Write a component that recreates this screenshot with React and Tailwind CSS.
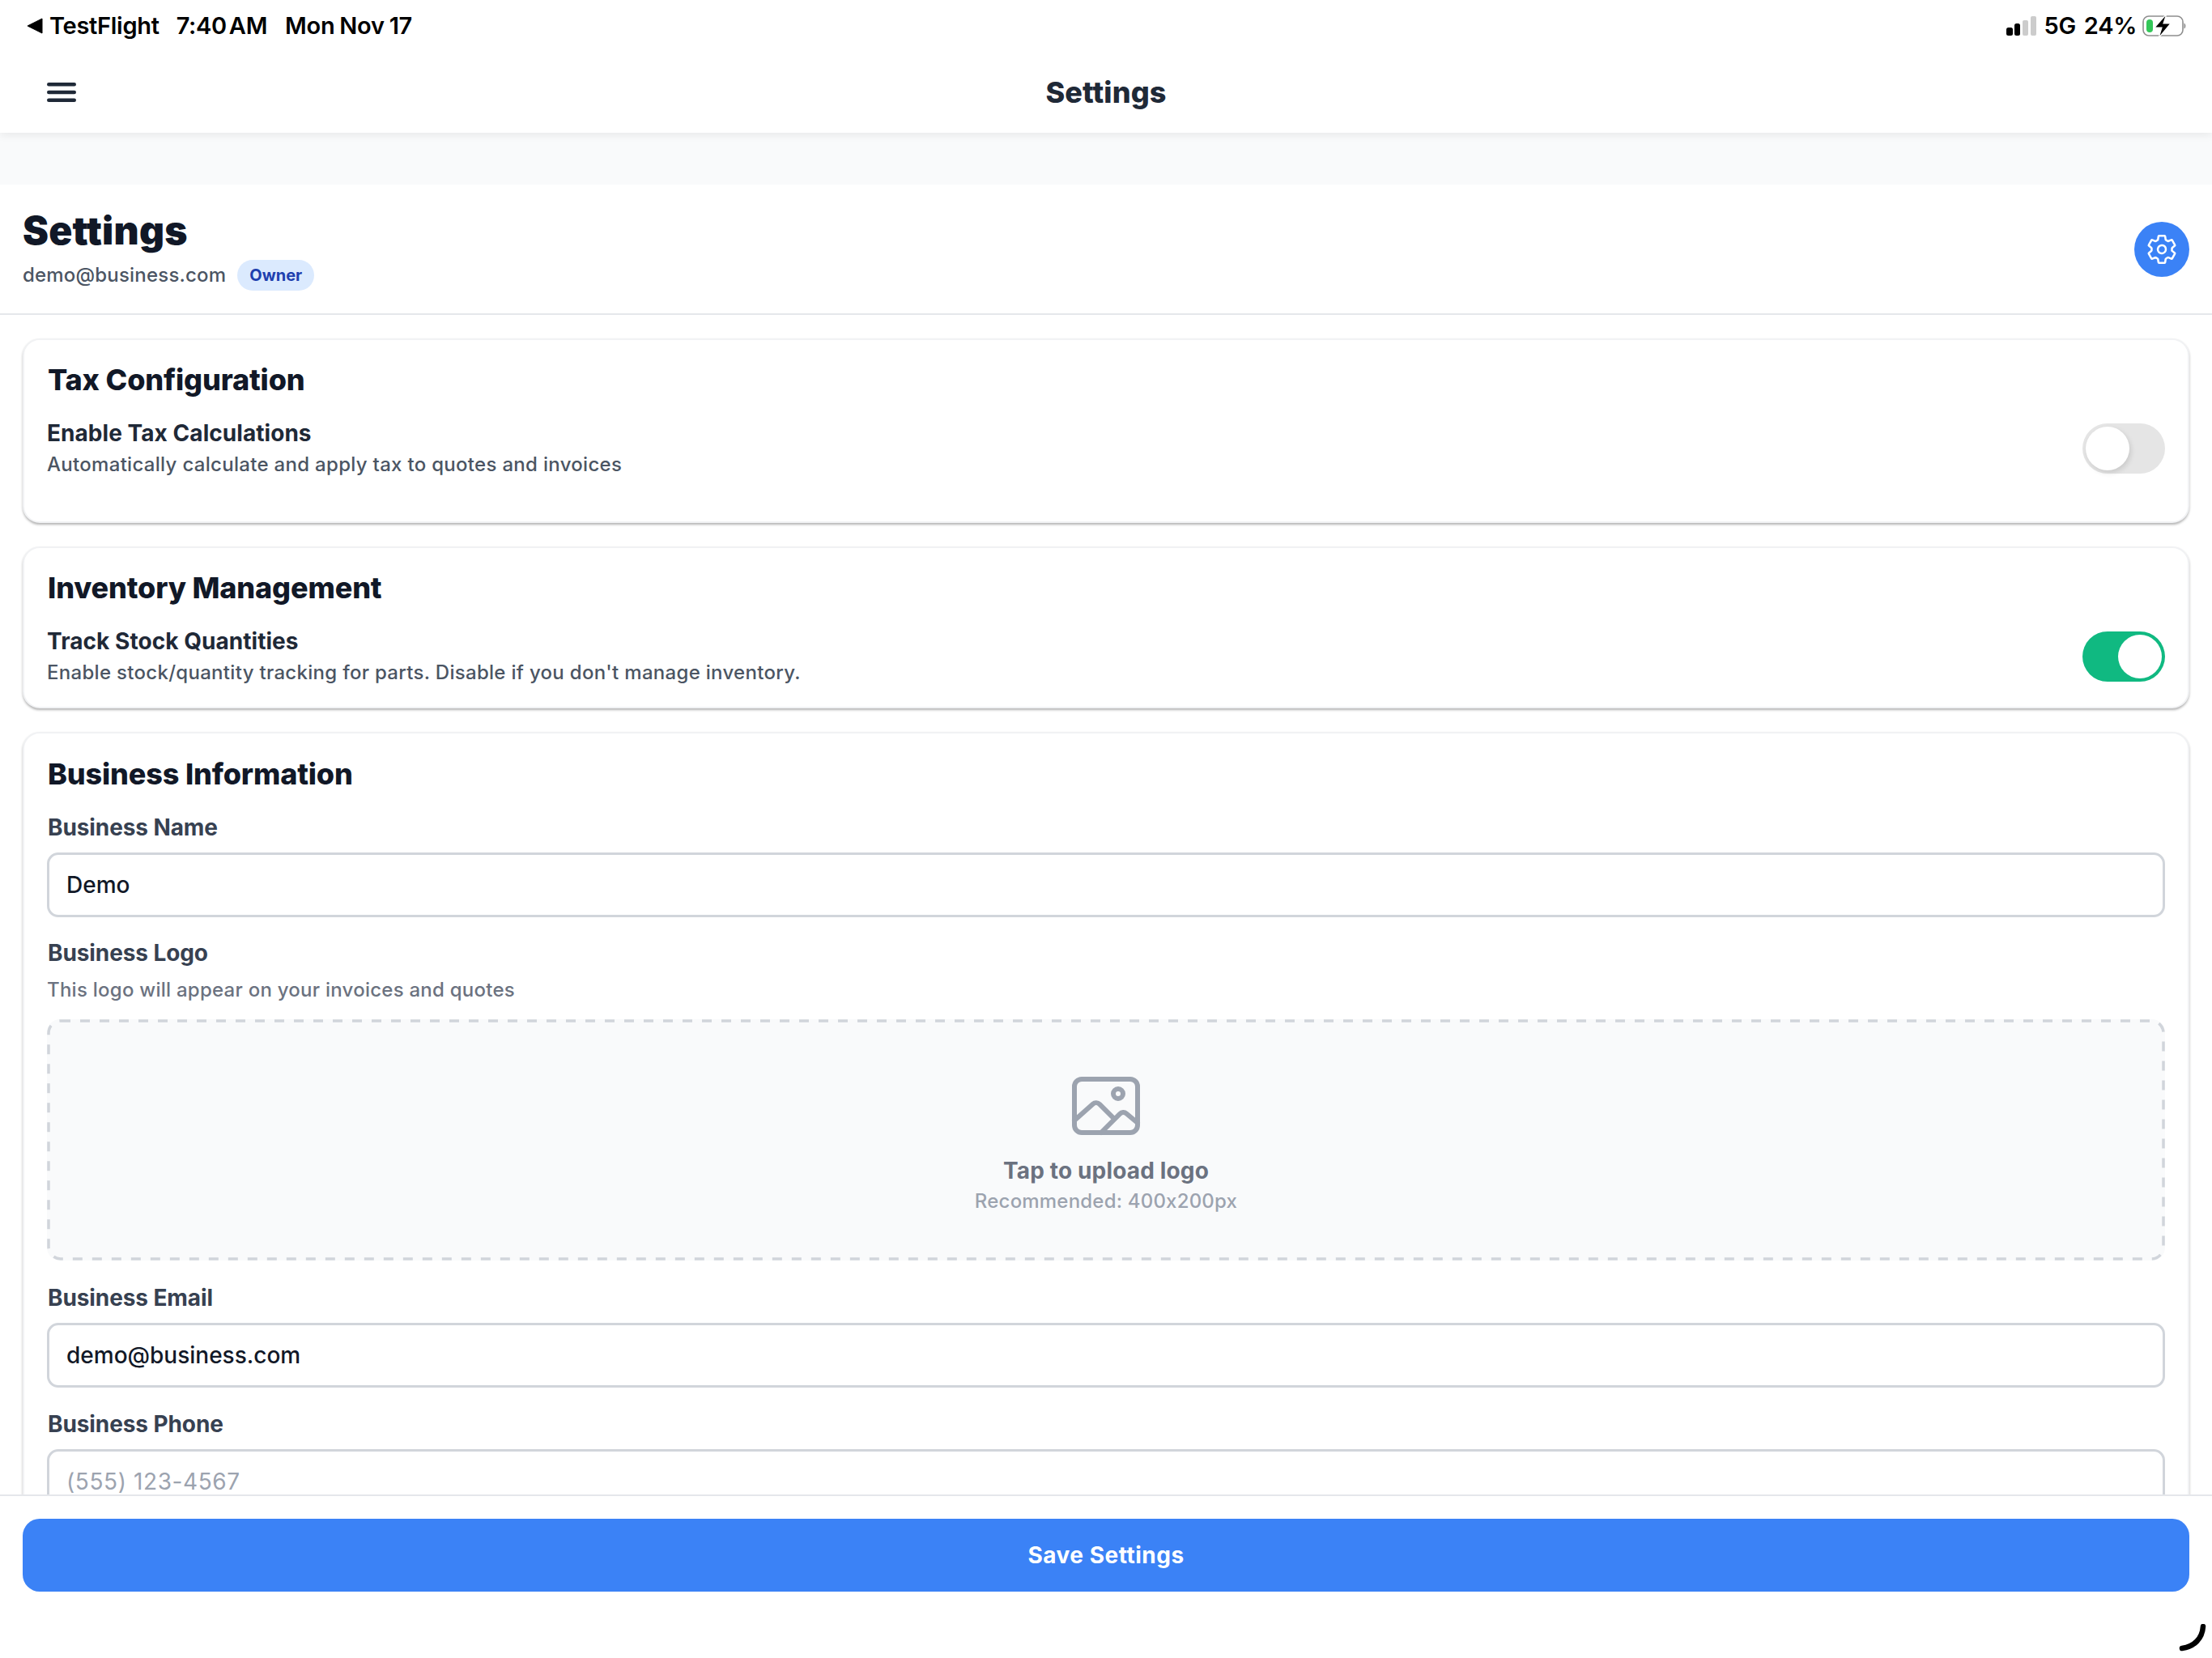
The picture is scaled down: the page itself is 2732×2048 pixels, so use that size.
import React from "react";
import { IoMenu, IoSettingsOutline, IoImageOutline } from "react-icons/io5";

const StatusBar = () => (
  <div className="flex h-[64px] items-center justify-between pl-[33px] pr-[30px] text-[29px] font-semibold tracking-[-0.3px] text-black">
    <div className="flex items-center">
      <svg width="20" height="20" viewBox="0 0 20 20" className="mr-[8px]">
        <path d="M19 1v18L1 10z" fill="#000" stroke="#000" strokeLinejoin="round" />
      </svg>
      <span>TestFlight</span>
      <span className="ml-[21px] [word-spacing:-4px]">7:40 AM</span>
      <span className="ml-[22px] [word-spacing:-1px]">Mon Nov 17</span>
    </div>
    <div className="flex items-center">
      <svg width="38" height="24" viewBox="0 0 38 24" className="mr-[-1px]">
        <rect x="0" y="14" width="8" height="10" rx="2.5" fill="#000" />
        <rect x="10" y="9" width="7" height="15" rx="2.5" fill="#000" />
        <rect x="20" y="5" width="7" height="19" rx="2" fill="#ccc" />
        <rect x="30" y="0" width="7" height="24" rx="2" fill="#ccc" />
      </svg>
      <span className="ml-[9px]">5G</span>
      <span className="ml-[10px]">24%</span>
      <svg width="56" height="30" viewBox="0 0 56 30" className="ml-[7px]">
        <rect x="1" y="3" width="49" height="24" rx="7" fill="none" stroke="#8e8e8e" strokeWidth="1.6" />
        <rect x="5" y="7" width="8" height="16" rx="4" fill="#34c759" />
        <path d="M51.5 11.5c2.5 1 2.5 6 0 7z" fill="#8e8e8e" />
        <path d="M30 0 15 17h9l-4 13 15-18h-9z" fill="#000" stroke="#fff" strokeWidth="1.2" />
      </svg>
    </div>
  </div>
);

const Switch = ({ on }) => (
  <div
    className={
      on
        ? "flex h-[62px] w-[102px] shrink-0 items-center justify-end rounded-full bg-[#10b981] pr-[4px]"
        : "flex h-[62px] w-[102px] shrink-0 items-center rounded-full bg-[#e5e5e5] pl-[4px]"
    }
  >
    <div
      className={
        on
          ? "h-[54px] w-[54px] rounded-full bg-white"
          : "h-[54px] w-[54px] rounded-full bg-white shadow-[2px_3px_6px_rgba(0,0,0,0.12)]"
      }
    />
  </div>
);

const Card = ({ children, className }) => (
  <div
    className={
      "rounded-[21px] border-2 border-[#f1f2f4] bg-white px-[28px] shadow-[0_2px_3px_rgba(0,0,0,0.3)] " +
      className
    }
  >
    {children}
  </div>
);

const CardTitle = ({ children }) => (
  <h2 className="ml-[1px] text-[36px] leading-[44px] font-extrabold tracking-[-0.15px] text-[#111827]">{children}</h2>
);

const ToggleRow = ({ title, desc, on }) => (
  <div className="flex items-center justify-between">
    <div>
      <div className="text-[28px] leading-[36px] font-[650] tracking-[0.05px] text-[#1f2937]">{title}</div>
      <div className="mt-[4px] text-[24px] leading-[34px] font-medium tracking-[0.3px] text-[#4b5563]">{desc}</div>
    </div>
    <Switch on={on} />
  </div>
);

const Field = ({ label, value, placeholder }) => (
  <div>
    <div className="ml-[1px] text-[28px] leading-[36px] font-[650] tracking-[-0.1px] text-[#374151]">{label}</div>
    <div className="mt-[13px] flex h-[80px] items-center rounded-[14px] border-[3px] border-[#d1d5db] bg-white px-[21px] text-[28px] font-medium">
      {value ? (
        <span className="text-[#111827]">{value}</span>
      ) : (
        <span className="font-normal tracking-[0.6px] text-[#9ca3af]">{placeholder}</span>
      )}
    </div>
  </div>
);

const App = () => {
  return (
    <div className="relative flex h-[2048px] w-[2732px] flex-col overflow-hidden bg-white font-['Inter',sans-serif]">
      <div className="relative z-10 h-[164px] bg-white shadow-[0_3px_10px_rgba(0,0,0,0.07)]">
        <StatusBar />
        <div className="flex h-[100px] items-center px-[52px]">
          <IoMenu className="h-[48px] w-[48px] text-[#1f2937]" />
          <div className="mr-[48px] flex-1 text-center text-[36px] font-extrabold tracking-[0.1px] text-[#1f2937]">Settings</div>
        </div>
      </div>

      <div className="h-[64px] bg-[#f9fafb]" />

      <div className="flex h-[161px] items-center justify-between border-b-2 border-[#e5e7eb] pr-[28px] pl-[28px]">
        <div>
          <h1 className="text-[48px] leading-[56px] font-black tracking-[0.2px] text-[#111827]">Settings</h1>
          <div className="mt-[8px] flex items-center">
            <span className="text-[24px] font-medium tracking-[0.2px] text-[#4b5563]">demo@business.com</span>
            <span className="ml-[14px] flex h-[38px] w-[95px] items-center justify-center rounded-full bg-[#dbeafe] text-[20px] font-bold text-[#1e40af]">
              Owner
            </span>
          </div>
        </div>
        <div className="flex h-[68px] w-[68px] items-center justify-center rounded-full bg-[#3b82f6]">
          <IoSettingsOutline className="h-[40px] w-[40px] text-white" />
        </div>
      </div>

      <div className="flex min-h-0 flex-1 flex-col gap-[29px] overflow-hidden px-[28px] pt-[29px]">
        <Card className="h-[228px] shrink-0 pt-[27px]">
          <CardTitle>Tax Configuration</CardTitle>
          <div className="mt-[26px]">
            <ToggleRow
              title="Enable Tax Calculations"
              desc="Automatically calculate and apply tax to quotes and invoices"
            />
          </div>
        </Card>

        <Card className="h-[200px] shrink-0 pt-[27px]">
          <CardTitle>Inventory Management</CardTitle>
          <div className="mt-[26px]">
            <ToggleRow
              title="Track Stock Quantities"
              desc="Enable stock/quantity tracking for parts. Disable if you don't manage inventory."
              on
            />
          </div>
        </Card>

        <Card className="shrink-0 pt-[28px] pb-[40px]">
          <CardTitle>Business Information</CardTitle>
          <div className="mt-[26px]">
            <Field label="Business Name" value="Demo" />
          </div>
          <div className="mt-[26px] ml-[1px] text-[28px] leading-[36px] font-[650] tracking-[-0.1px] text-[#374151]">Business Logo</div>
          <div className="mt-[13px] text-[24px] leading-[30px] font-medium tracking-[0.25px] text-[#6b7280]">
            This logo will appear on your invoices and quotes
          </div>
          <div className="relative mt-[21px] flex h-[298px] flex-col items-center rounded-[16px] bg-[#f9fafb] pt-[59px]">
            <svg width="2616" height="298" viewBox="0 0 2616 298" fill="none" className="absolute inset-0">
              <rect x="2" y="2" width="2612" height="294" rx="15" stroke="#d1d5db" strokeWidth="3.5" strokeDasharray="12 12" />
            </svg>
            <IoImageOutline className="h-[96px] w-[96px] text-[#9ca3af]" />
            <div className="mt-[14px] text-[28px] leading-[36px] font-[650] tracking-[0.15px] text-[#6b7280]">Tap to upload logo</div>
            <div className="mt-[4px] text-[24px] leading-[32px] font-medium tracking-[0.2px] text-[#9ca3af] [font-feature-settings:'calt'_0]">
              Recommended: 400x200px
            </div>
          </div>
          <div className="mt-[28px]">
            <Field label="Business Email" value="demo@business.com" />
          </div>
          <div className="mt-[27px]">
            <Field label="Business Phone" placeholder="(555) 123-4567" />
          </div>
        </Card>
      </div>

      <div className="relative z-10 h-[202px] border-t-2 border-[#e5e7eb] bg-white px-[28px] pt-[28px]">
        <div className="flex h-[90px] items-center justify-center rounded-[21px] bg-[#3b82f6] text-[28px] font-bold tracking-[0.5px] text-white">
          Save Settings
        </div>
      </div>

      <svg width="36" height="34" viewBox="0 0 36 34" fill="none" className="absolute right-[6px] bottom-[8px] z-20">
        <path d="M31 3c-1 15-11 25-26 27" stroke="#000" strokeWidth="6.5" strokeLinecap="round" />
      </svg>
    </div>
  );
};

export default App;
